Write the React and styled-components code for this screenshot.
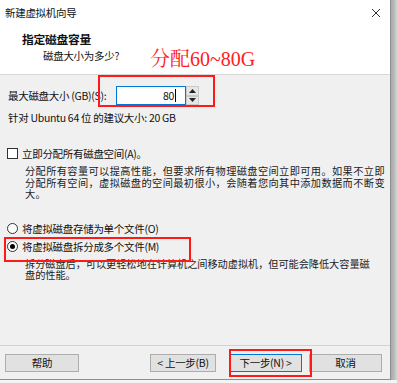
import React from "react";
import styled, { createGlobalStyle } from "styled-components";

const GlobalStyle = createGlobalStyle`
  html, body {
    margin: 0;
    padding: 0;
    background: #f4f4f4;
  }
  body {
    font-family: "Noto Sans CJK SC", "Noto Sans", sans-serif;
    font-size: 10.5px;
    letter-spacing: -0.3px;
    color: #111;
  }
`;

const Page = styled.div`
  display: flex;
  width: 397px;
  height: 383px;
  overflow: hidden;
`;

const Window = styled.div`
  position: relative;
  width: 390px;
  height: 379px;
  display: flex;
  flex-direction: column;
  background: #f0f0f0;
  border-right: 1px solid #8e8e8e;
  border-bottom: 1px solid #8e8e8e;
`;

const Shade = styled.div`
  width: 6px;
  height: 380px;
  background: linear-gradient(90deg, #a9a9a9, #bdbdbd 60%, #d6d6d6);
`;

const Header = styled.div`
  height: 74px;
  background: #fff;
  border-bottom: 1px solid #d7d7d7;
  display: flex;
  flex-direction: column;
`;

const TitleBar = styled.div`
  display: flex;
  align-items: center;
  justify-content: space-between;
  height: 24px;
  padding: 1px 9px 0 5px;
  line-height: 12px;
`;

const Heading = styled.div`
  margin: 7px 0 0 22px;
  font-weight: 700;
  font-size: 11.8px;
  line-height: 14px;
`;

const SubHeading = styled.div`
  margin: 4px 0 0 43px;
  line-height: 12px;
`;

const Body = styled.div`
  flex: 1;
  padding: 11px 0 0 8px;
  display: flex;
  flex-direction: column;
`;

const SizeRow = styled.div`
  display: flex;
  align-items: center;
  height: 19px;
`;

const SizeLabel = styled.span`
  width: 108px;
  line-height: 12px;
`;

const NumberInput = styled.div`
  box-sizing: border-box;
  width: 70px;
  height: 19px;
  background: #fff;
  border: 1px solid #0078d7;
  display: flex;
  align-items: center;
  justify-content: flex-end;
  padding-right: 9px;
  line-height: 12px;
`;

const Caret = styled.span`
  display: inline-block;
  width: 1px;
  height: 13px;
  margin-left: 1px;
  background: #000;
`;

const Spinner = styled.div`
  display: flex;
  flex-direction: column;
  width: 13px;
  height: 19px;
`;

const SpinButton = styled.div`
  flex: 1;
  box-sizing: border-box;
  border: 1px solid #c9c9c9;
  background: #e6e6e6;
  display: flex;
  align-items: center;
  justify-content: center;
`;

const Line = styled.div`
  line-height: 12px;
  margin-top: ${({ $mt }) => $mt || 0}px;
`;

const OptionRow = styled.div`
  display: flex;
  align-items: center;
  height: 12px;
  margin-top: ${({ $mt }) => $mt}px;
  margin-left: -1px;
`;

const CheckBox = styled.span`
  box-sizing: border-box;
  width: 11px;
  height: 11px;
  border: 1px solid #333;
  background: #fff;
  margin-right: 4px;
`;

const Radio = styled.span`
  box-sizing: border-box;
  width: 11px;
  height: 11px;
  border-radius: 50%;
  border: 1px solid #333;
  background: #fff;
  margin-right: 4px;
  display: flex;
  align-items: center;
  justify-content: center;
  &::after {
    content: "";
    width: 5px;
    height: 5px;
    border-radius: 50%;
    background: ${({ $on }) => ($on ? "#000" : "transparent")};
  }
`;

const Desc = styled.div`
  margin: ${({ $mt }) => $mt}px 0 0 17px;
  font-family: "Liberation Sans", "Noto Sans CJK SC", sans-serif;
  font-size: 10.2px;
  line-height: 11.5px;
  white-space: nowrap;
  letter-spacing: ${({ $ls }) => $ls}px;
  color: #1c1c1c;
`;

const Separator = styled.div`
  height: 1px;
  background: #d2d2d2;
`;

const ButtonBar = styled.div`
  height: 33px;
  display: flex;
  align-items: flex-start;
  padding: 8px 0 0 5px;
  box-sizing: border-box;
`;

const Button = styled.div`
  box-sizing: border-box;
  width: ${({ $w }) => $w}px;
  height: 18px;
  margin-left: ${({ $ml }) => $ml || 0}px;
  background: #e1e1e1;
  border: 1px solid ${({ $primary }) => ($primary ? "#0078d7" : "#adadad")};
  display: flex;
  align-items: center;
  justify-content: center;
  line-height: 12px;
`;

const Mark = styled.div`
  position: absolute;
  box-sizing: border-box;
  border: 2px solid #ff1a1a;
  left: ${({ $x }) => $x}px;
  top: ${({ $y }) => $y}px;
  width: ${({ $w }) => $w}px;
  height: ${({ $h }) => $h}px;
`;

const Note = styled.div`
  position: absolute;
  left: 150px;
  top: 47px;
  color: #ff2020;
  font-family: "Liberation Serif", "Noto Serif CJK SC", "Noto Sans CJK SC", serif;
  font-size: 20px;
  letter-spacing: 0;
  line-height: 24px;
`;

const Arrow = ({ up }) => (
  <svg width="7" height="4" viewBox="0 0 7 4">
    <path d={up ? "M0 4 L3.5 0 L7 4 Z" : "M0 0 L3.5 4 L7 0 Z"} fill="#222" />
  </svg>
);

const CloseIcon = () => (
  <svg width="10" height="10" viewBox="0 0 10 10">
    <path d="M1 1 L9 9 M9 1 L1 9" stroke="#333" strokeWidth="1" />
  </svg>
);

export default function App() {
  return (
    <>
      <GlobalStyle />
      <Page>
        <Window>
          <Header>
            <TitleBar>
              <span>新建虚拟机向导</span>
              <CloseIcon />
            </TitleBar>
            <Heading>指定磁盘容量</Heading>
            <SubHeading>磁盘大小为多少?</SubHeading>
          </Header>

          <Body>
            <SizeRow>
              <SizeLabel>最大磁盘大小 (GB)(S):</SizeLabel>
              <NumberInput>
                80<Caret />
              </NumberInput>
              <Spinner>
                <SpinButton><Arrow up /></SpinButton>
                <SpinButton><Arrow /></SpinButton>
              </Spinner>
            </SizeRow>
            <Line $mt={7}>针对 Ubuntu 64 位 的建议大小: 20 GB</Line>

            <OptionRow $mt={23}>
              <CheckBox />
              立即分配所有磁盘空间(A)。
            </OptionRow>
            <Desc $mt={7} $ls={0.4}>
              分配所有容量可以提高性能，但要求所有物理磁盘空间立即可用。如果不立即
              <br />
              分配所有空间，虚拟磁盘的空间最初很小，会随着您向其中添加数据而不断变
              <br />
              大。
            </Desc>

            <OptionRow $mt={22}>
              <Radio />
              将虚拟磁盘存储为单个文件(O)
            </OptionRow>
            <OptionRow $mt={6}>
              <Radio $on />
              将虚拟磁盘拆分成多个文件(M)
            </OptionRow>
            <Desc $mt={6} $ls={-0.05}>
              拆分磁盘后，可以更轻松地在计算机之间移动虚拟机，但可能会降低大容量磁
              <br />
              盘的性能。
            </Desc>
          </Body>

          <Separator />
          <ButtonBar>
            <Button $w={74}>帮助</Button>
            <Button $w={66} $ml={71}>&lt; 上一步(B)</Button>
            <Button $w={73} $ml={13} $primary>下一步(N) &gt;</Button>
            <Button $w={73} $ml={7}>取消</Button>
          </ButtonBar>

          <Note>分配60~80G</Note>
          <Mark $x={98} $y={75} $w={117} $h={32} />
          <Mark $x={4} $y={237} $w={187} $h={25} />
          <Mark $x={229} $y={349} $w={83} $h={28} />
        </Window>
        <Shade />
      </Page>
    </>
  );
}
